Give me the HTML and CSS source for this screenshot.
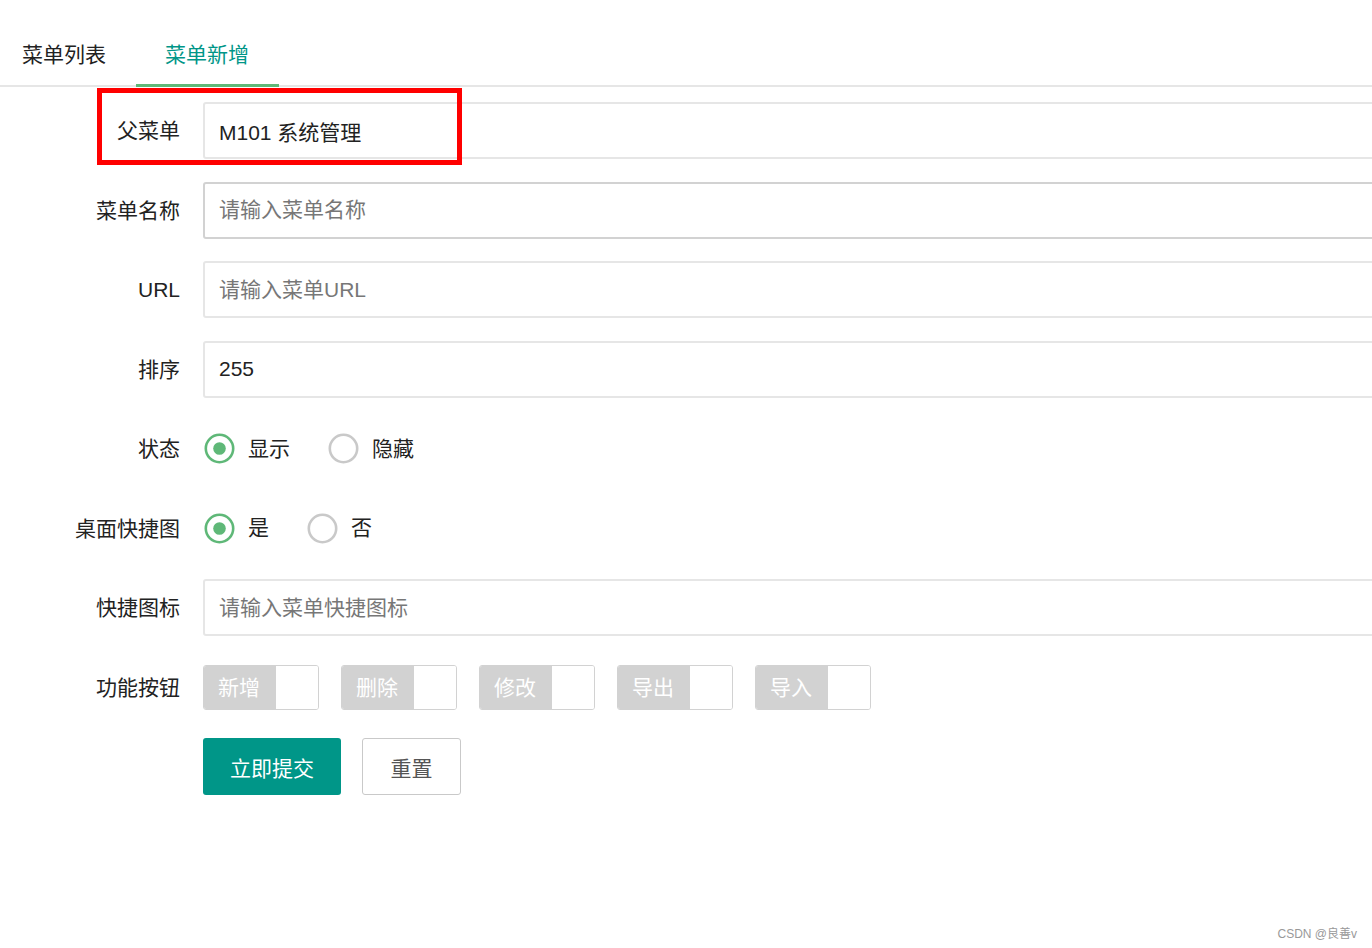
FILE: index.html
```html
<!DOCTYPE html>
<html lang="zh-CN">
<head>
    <meta charset="utf-8">
    <title>菜单新增</title>
    <link rel="stylesheet" href="styles.css">
</head>
<body>
    <div class="tab">
        <ul class="tab-title">
            <li>菜单列表</li>
            <li class="tab-this">菜单新增</li>
        </ul>
    </div>

    <form class="menu-form">
        <div class="form-item">
            <label class="form-label">父菜单</label>
            <div class="input-block">
                <input class="input" type="text" value="M101 系统管理" readonly>
            </div>
        </div>

        <div class="form-item">
            <label class="form-label">菜单名称</label>
            <div class="input-block">
                <input class="input input-hover" type="text" placeholder="请输入菜单名称">
            </div>
        </div>

        <div class="form-item">
            <label class="form-label">URL</label>
            <div class="input-block">
                <input class="input" type="text" placeholder="请输入菜单URL">
            </div>
        </div>

        <div class="form-item">
            <label class="form-label">排序</label>
            <div class="input-block">
                <input class="input" type="text" value="255">
            </div>
        </div>

        <div class="form-item">
            <label class="form-label">状态</label>
            <div class="input-block radios">
                <div class="radio radio-on">
                    <svg width="31" height="31" viewBox="0 0 31 31"><circle cx="15.5" cy="15.5" r="13.7" fill="none" stroke="#5fb878" stroke-width="2.6"/><circle cx="15.5" cy="15.5" r="6.3" fill="#5fb878"/></svg>
                    <span>显示</span>
                </div>
                <div class="radio">
                    <svg width="31" height="31" viewBox="0 0 31 31"><circle cx="15.5" cy="15.5" r="13.7" fill="none" stroke="#c9c9c9" stroke-width="2.6"/></svg>
                    <span>隐藏</span>
                </div>
            </div>
        </div>

        <div class="form-item">
            <label class="form-label">桌面快捷图</label>
            <div class="input-block radios">
                <div class="radio radio-on">
                    <svg width="31" height="31" viewBox="0 0 31 31"><circle cx="15.5" cy="15.5" r="13.7" fill="none" stroke="#5fb878" stroke-width="2.6"/><circle cx="15.5" cy="15.5" r="6.3" fill="#5fb878"/></svg>
                    <span>是</span>
                </div>
                <div class="radio">
                    <svg width="31" height="31" viewBox="0 0 31 31"><circle cx="15.5" cy="15.5" r="13.7" fill="none" stroke="#c9c9c9" stroke-width="2.6"/></svg>
                    <span>否</span>
                </div>
            </div>
        </div>

        <div class="form-item">
            <label class="form-label">快捷图标</label>
            <div class="input-block">
                <input class="input" type="text" placeholder="请输入菜单快捷图标">
            </div>
        </div>

        <div class="form-item">
            <label class="form-label">功能按钮</label>
            <div class="input-block checks">
                <div class="checkbox"><span>新增</span><i></i></div>
                <div class="checkbox"><span>删除</span><i></i></div>
                <div class="checkbox"><span>修改</span><i></i></div>
                <div class="checkbox"><span>导出</span><i></i></div>
                <div class="checkbox"><span>导入</span><i></i></div>
            </div>
        </div>

        <div class="form-item">
            <div class="form-label"></div>
            <div class="input-block btns">
                <button class="btn" type="button">立即提交</button>
                <button class="btn btn-primary" type="reset">重置</button>
            </div>
        </div>
    </form>

    <div class="mark"></div>
    <div class="watermark">CSDN @良善v</div>
</body>
</html>
```

FILE: styles.css
```css
html{overflow: hidden;}

body{
    margin: 0;
    background-color: white;
    color: #222;
    font-family: "Liberation Sans", "Noto Sans CJK SC", sans-serif;
    font-size: 21px;
}

*{box-sizing: border-box;}

.tab-title{
    list-style: none;
    margin: 0;
    padding: 25px 0 0 0;
    display: flex;
    border-bottom: 2px solid #e6e6e6;
}

.tab-title li{
    position: relative;
    height: 60px;
    line-height: 60px;
    padding: 0 29.5px;
    color: #222;
}

.tab-title li:first-child{padding-left: 22px;}

.tab-this{color: #009688 !important;}

.tab-this::after{
    content: "";
    position: absolute;
    left: 0;
    right: 0;
    bottom: -2px;
    height: 3px;
    background-color: #5fb878;
}

.menu-form{
    margin-top: 15px;
    padding-left: 38px;
    overflow: hidden;
}

.form-item{
    display: flex;
    align-items: flex-start;
    margin-bottom: 22.5px;
}

.form-label{
    width: 165px;
    flex-shrink: 0;
    height: 57px;
    line-height: 57px;
    padding-right: 23px;
    text-align: right;
}

.input-block{
    width: 1250px;
    flex-shrink: 0;
    min-height: 57px;
}

.input{
    width: 100%;
    height: 57px;
    padding: 0 14px;
    border: 2px solid #e6e6e6;
    border-radius: 3px;
    font-family: inherit;
    font-size: 21px;
    color: #222;
    outline: none;
}

.input::placeholder{color: #777;}

.input-hover{border-color: #d2d2d2;}

.radios{
    display: flex;
    align-items: center;
    height: 57px;
}

.radio{
    display: flex;
    align-items: center;
    margin-right: 37px;
}

.radio svg{
    display: block;
    margin-left: 1px;
    margin-right: 13px;
}

.radio span{line-height: 30px;}

.checks{
    display: flex;
    padding-top: 6px;
}

.checkbox{
    display: flex;
    width: 116px;
    height: 45px;
    flex-shrink: 0;
    margin-right: 22px;
    border: 1px solid #d2d2d2;
    border-radius: 3px;
    overflow: hidden;
}

.checkbox span{
    width: 72px;
    padding-left: 14px;
    line-height: 43px;
    background-color: #d2d2d2;
    color: white;
}

.checkbox i{
    flex: 1;
    background-color: white;
}

.btns{display: flex;}

.btn{
    height: 57px;
    padding: 0 27px;
    margin-right: 21px;
    border: none;
    border-radius: 3px;
    background-color: #009688;
    color: white;
    font-family: inherit;
    font-size: 21px;
}

.btn-primary{
    padding: 0 27.5px;
    background-color: white;
    border: 1.5px solid #c9c9c9;
    color: #555;
}

.mark{
    position: absolute;
    left: 97px;
    top: 88px;
    width: 365px;
    height: 77px;
    border: 5px solid #ff0000;
}

.watermark{
    position: absolute;
    right: 15px;
    top: 924px;
    font-size: 12px;
    color: #999;
}
```
